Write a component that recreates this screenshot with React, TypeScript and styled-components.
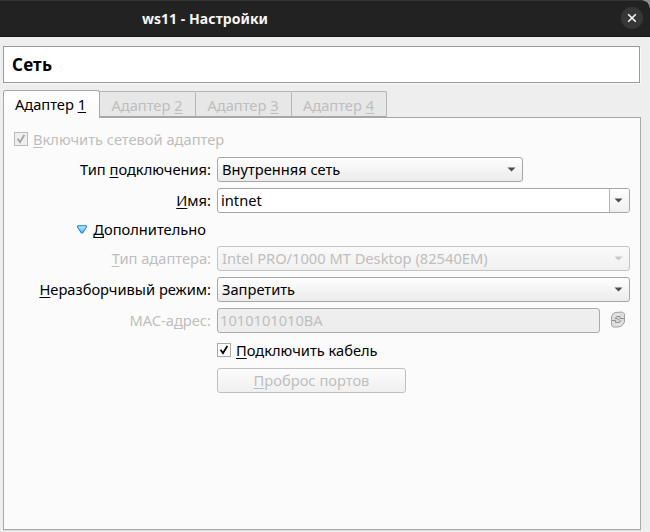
import React from "react";
import styled, { createGlobalStyle, css } from "styled-components";

const GlobalStyle = createGlobalStyle`
  *, *::before, *::after { box-sizing: border-box; }
  html, body { margin: 0; padding: 0; background: #eeeeee; }
  body {
    overflow: hidden;
    font-family: "Noto Sans", "Open Sans", sans-serif;
    font-size: 14.67px;
    line-height: 20px;
    color: #000;
  }
`;

const Backdrop = styled.div`
  width: 650px;
  height: 532px;
  background: linear-gradient(#8b8b8b 0 20px, #eeeeee 20px);
`;

const Window = styled.main`
  display: flex;
  flex-direction: column;
  height: 100%;
  background: #eeeeee;
  border-top-right-radius: 8px;
  overflow: hidden;
`;

const TitleBar = styled.header`
  display: grid;
  grid-template-columns: 410px 1fr;
  align-items: center;
  flex: none;
  height: 37px;
  padding-right: 7px;
  background: #222222;
  border-top: 1px solid #343434;
  border-bottom: 1px solid #161616;
  border-top-right-radius: 8px;
`;

const WindowTitle = styled.h1`
  margin: 0;
  font-size: 14px;
  line-height: 20px;
  font-weight: 700;
  letter-spacing: 0.05px;
  text-align: center;
  color: #f5f5f5;
`;

const CloseButton = styled.button`
  display: grid;
  place-items: center;
  justify-self: end;
  width: 22px;
  height: 22px;
  margin-bottom: 1px;
  padding: 0;
  border: 0;
  border-radius: 50%;
  background: #373737;
`;

const PageHeading = styled.h2`
  flex: none;
  display: flex;
  align-items: center;
  width: 637px;
  height: 37px;
  margin: 9px 0 0 3px;
  padding: 0 0 0 8px;
  font-size: 17px;
  font-weight: 700;
  letter-spacing: 0.2px;
  background: #fff;
  border: 1px solid #9a9a9a;
  box-shadow: 1px 1px 0 #f9f9f9;
`;

const TabBar = styled.nav`
  flex: none;
  display: flex;
  align-items: flex-end;
  height: 28px;
  margin: 7px 0 -1px 3px;
`;

const Tab = styled.button<{ $active?: boolean }>`
  flex: none;
  width: 96px;
  height: 26px;
  margin-bottom: 1px;
  padding: 1px 1px 0 0;
  font: inherit;
  white-space: nowrap;
  color: #bebebe;
  background: #e7e7e7;
  border: 1px solid #b5b5b5;
  border-left: 0;
  border-bottom-color: #a8a8a8;
  border-radius: 0 2px 0 0;

  &:last-child { width: 95px; }

  ${(p) =>
    p.$active &&
    css`
      z-index: 1;
      width: 97px;
      height: 28px;
      margin-bottom: 0;
      padding: 0 2px 1px 0;
      color: #000;
      background: linear-gradient(#ffffff, #fbfbfb);
      border: 1px solid #a8a8a8;
      border-bottom: 0;
      border-radius: 3px 3px 0 0;
    `}
`;

const Pane = styled.section`
  flex: none;
  width: 638px;
  height: 413px;
  margin-left: 3px;
  padding: 11px 10px 0;
  background: #fbfbfb;
  border: 1px solid #a8a8a8;
  box-shadow: 0 1px 0 #dedede;
`;

const CheckLabel = styled.label<{ $disabled?: boolean }>`
  display: flex;
  align-items: center;
  gap: 5px;
  height: 20px;
  color: ${(p) => (p.$disabled ? "#bebebe" : "#000")};
`;

const CheckBox = styled.span<{ $disabled?: boolean }>`
  display: grid;
  place-items: center;
  width: 14px;
  height: 14px;
  border: 1px solid ${(p) => (p.$disabled ? "#bababa" : "#aaaaaa")};
  background: ${(p) => (p.$disabled ? "#efefef" : "#fff")};
  color: ${(p) => (p.$disabled ? "#a0a0a0" : "#000")};
`;

const Form = styled.div`
  display: grid;
  grid-template-columns: 197px 1fr;
  grid-template-rows: 31px 31px 27px 31px 31px 31px 29px 25px;
  column-gap: 6px;
  margin-top: 8px;
`;

const FieldLabel = styled.label<{ $disabled?: boolean }>`
  grid-column: 1;
  height: 25px;
  line-height: 25px;
  text-align: right;
  white-space: nowrap;
  color: ${(p) => (p.$disabled ? "#bebebe" : "#000")};
`;

const Expander = styled.div`
  grid-column: 1;
  display: flex;
  align-items: center;
  justify-content: flex-end;
  gap: 6px;
  height: 20px;
  padding-right: 5px;
`;

const Field = styled.div`
  grid-column: 2;
  display: flex;
`;

const CableField = styled(Field)`
  padding-top: 1px;
`;

const surface = css<{ $disabled?: boolean }>`
  height: 25px;
  border: 1px solid ${(p) => (p.$disabled ? "#c4c4c4" : "#a6a6a6")};
  border-radius: 3px;
  color: ${(p) => (p.$disabled ? "#bebebe" : "#000")};
  white-space: nowrap;
`;

const Select = styled.div<{ $width: number; $disabled?: boolean }>`
  ${surface}
  display: flex;
  align-items: center;
  justify-content: space-between;
  width: ${(p) => p.$width}px;
  padding: 0 6px 1px 4px;
  background: ${(p) =>
    p.$disabled ? "linear-gradient(#fafafa, #f0f0f0)" : "linear-gradient(#fefefe, #ebebeb)"};
`;

const ComboEdit = styled.div`
  ${surface}
  display: flex;
  width: 413px;
  overflow: hidden;
  background: #fff;
`;

const ComboText = styled.span`
  flex: 1;
  padding-left: 3px;
  line-height: 23px;
`;

const ComboArrow = styled.span`
  display: grid;
  place-items: center;
  width: 20px;
  padding: 0 3px 1px 0;
  border-left: 1px solid #b4b4b4;
  background: linear-gradient(#fefefe, #efefef);
`;

const ReadOnlyInput = styled.div`
  ${surface}
  width: 383px;
  padding-left: 2px;
  line-height: 23px;
  border-color: #aaaaaa;
  color: #bebebe;
  background: #eeeeee;
`;

const RefreshButton = styled.button`
  display: grid;
  place-items: center;
  width: 16px;
  height: 23px;
  margin-left: 10px;
  padding: 0;
  border: 0;
  background: none;
`;

const PushButton = styled.button`
  ${surface}
  width: 189px;
  padding: 0 0 2px;
  font: inherit;
  border-color: #c0c0c0;
  color: #bebebe;
  background: linear-gradient(#fcfcfc, #f0f0f0);
`;

const Mnemonic = styled.span`
  text-decoration: underline;
  text-decoration-thickness: 1px;
  text-underline-offset: 2px;
  text-decoration-skip-ink: none;
`;

const DropArrow = ({ muted = false }: { muted?: boolean }) => (
  <svg width="9" height="5" viewBox="0 0 9 5">
    <path d="M0.5 0.5h8L4.5 4.6z" fill={muted ? "#c8c8c8" : "#4c4c4c"} />
  </svg>
);

const CheckMark = () => (
  <svg width="12" height="12" viewBox="0 0 12 12" fill="none" stroke="currentColor">
    <path d="M2.6 5.8 5 9.2 9.3 2" strokeWidth="1.8" />
  </svg>
);

const tabs = ["2", "3", "4"];

export default function App() {
  return (
    <Backdrop>
      <GlobalStyle />
      <Window>
        <TitleBar>
          <WindowTitle>ws11 - Настройки</WindowTitle>
          <CloseButton aria-label="Закрыть">
            <svg width="10" height="10" viewBox="0 0 10 10" stroke="#fff" strokeWidth="1.5">
              <path d="M1.2 1.2 8.8 8.8M8.8 1.2 1.2 8.8" />
            </svg>
          </CloseButton>
        </TitleBar>
        <PageHeading>Сеть</PageHeading>
        <TabBar>
          <Tab $active>
            Адаптер <Mnemonic>1</Mnemonic>
          </Tab>
          {tabs.map((n) => (
            <Tab key={n} disabled>
              Адаптер <Mnemonic>{n}</Mnemonic>
            </Tab>
          ))}
        </TabBar>
        <Pane>
          <CheckLabel $disabled>
            <CheckBox $disabled>
              <CheckMark />
            </CheckBox>
            <span>
              <Mnemonic>В</Mnemonic>ключить сетевой адаптер
            </span>
          </CheckLabel>
          <Form>
            <FieldLabel>
              Тип <Mnemonic>п</Mnemonic>одключения:
            </FieldLabel>
            <Field>
              <Select $width={306}>
                Внутренняя сеть
                <DropArrow />
              </Select>
            </Field>

            <FieldLabel>
              <Mnemonic>И</Mnemonic>мя:
            </FieldLabel>
            <Field>
              <ComboEdit>
                <ComboText>intnet</ComboText>
                <ComboArrow>
                  <DropArrow />
                </ComboArrow>
              </ComboEdit>
            </Field>

            <Expander>
              <svg width="10" height="9" viewBox="0 0 10 9">
                <defs>
                  <linearGradient id="expander" x1="0" y1="0" x2="0" y2="1">
                    <stop offset="0" stopColor="#c4f0fd" />
                    <stop offset="1" stopColor="#35b8f2" />
                  </linearGradient>
                </defs>
                <path
                  d="M0.6 0.8h8.8v1.4L5.7 8H4.3L0.6 2.2z"
                  fill="url(#expander)"
                  stroke="#1a74c8"
                  strokeLinejoin="round"
                />
              </svg>
              <span>
                <Mnemonic>Д</Mnemonic>ополнительно
              </span>
            </Expander>

            <FieldLabel $disabled>
              <Mnemonic>Т</Mnemonic>ип адаптера:
            </FieldLabel>
            <Field>
              <Select $width={413} $disabled>
                Intel PRO/1000 MT Desktop (82540EM)
                <DropArrow muted />
              </Select>
            </Field>

            <FieldLabel>
              <Mnemonic>Н</Mnemonic>еразборчивый режим:
            </FieldLabel>
            <Field>
              <Select $width={413}>
                Запретить
                <DropArrow />
              </Select>
            </Field>

            <FieldLabel $disabled>
              MAC-а<Mnemonic>д</Mnemonic>рес:
            </FieldLabel>
            <Field>
              <ReadOnlyInput>1010101010BA</ReadOnlyInput>
              <RefreshButton aria-label="Обновить" disabled>
                <svg width="16" height="17" viewBox="0 0 16 17" fill="none">
                  <path
                    d="M5 1.5 12.5 1 14.5 3v8L13 13.5l-2 1.7-3 .8H3L1.5 14V5.5L3 3z"
                    fill="#dcdcdc"
                    stroke="#a2a2a2"
                    strokeLinejoin="round"
                  />
                  <path d="M1.5 9.5h4v1.8l4 .2L11 9.5M14.5 7.5H10V5.6L7 5.4 5 8M6 7.2l3.8 2.2" stroke="#929292" />
                  <path d="M3.8 5.5 6 3.2h4M6.5 13.8h3l2.5-2" stroke="#efefef" />
                </svg>
              </RefreshButton>
            </Field>

            <CableField>
              <CheckLabel>
                <CheckBox>
                  <CheckMark />
                </CheckBox>
                <span>
                  <Mnemonic>П</Mnemonic>одключить кабель
                </span>
              </CheckLabel>
            </CableField>

            <Field>
              <PushButton disabled>
                <Mnemonic>П</Mnemonic>роброс портов
              </PushButton>
            </Field>
          </Form>
        </Pane>
      </Window>
    </Backdrop>
  );
}
